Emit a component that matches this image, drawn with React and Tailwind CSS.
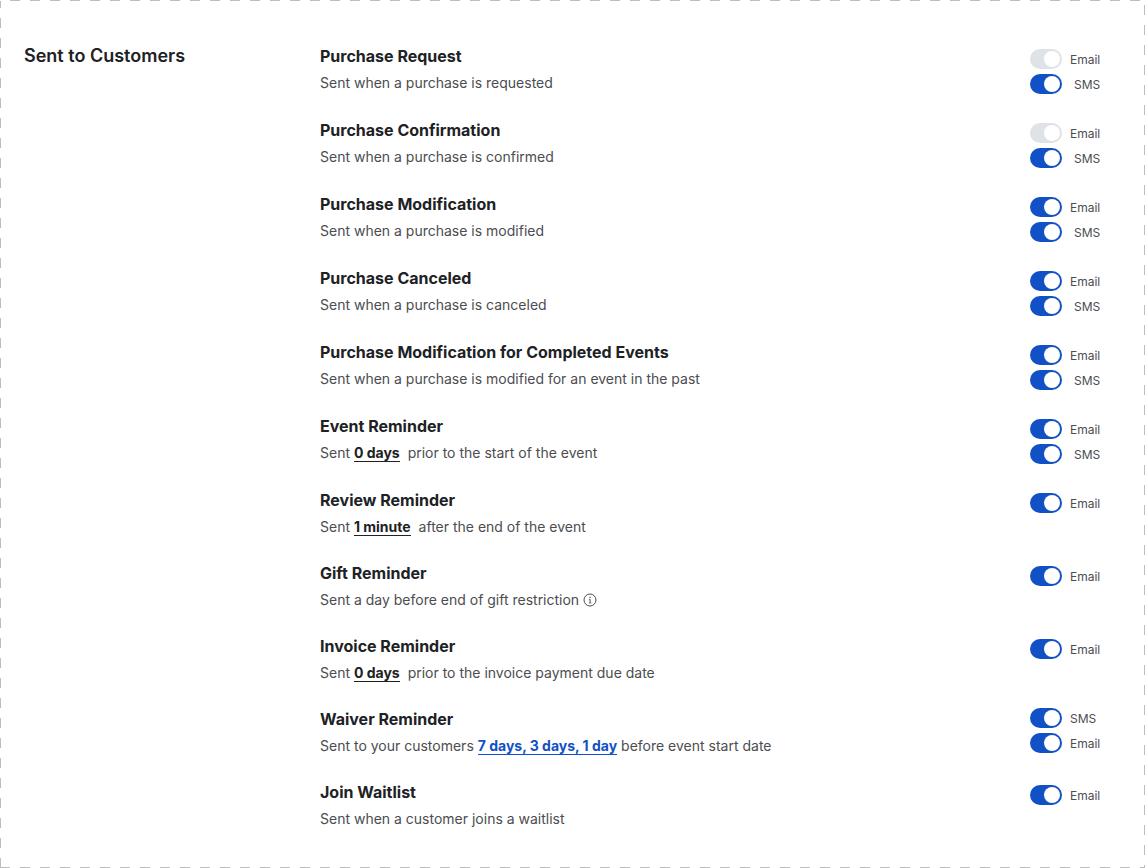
import React, { useState } from "react";

const notifications = [
  {
    id: "purchase-request",
    title: "Purchase Request",
    description: "Sent when a purchase is requested",
    channels: [
      { name: "Email", locked: true },
      { name: "SMS" },
    ],
  },
  {
    id: "purchase-confirmation",
    title: "Purchase Confirmation",
    description: "Sent when a purchase is confirmed",
    channels: [
      { name: "Email", locked: true },
      { name: "SMS" },
    ],
  },
  {
    id: "purchase-modification",
    title: "Purchase Modification",
    description: "Sent when a purchase is modified",
    channels: [{ name: "Email" }, { name: "SMS" }],
  },
  {
    id: "purchase-canceled",
    title: "Purchase Canceled",
    description: "Sent when a purchase is canceled",
    channels: [{ name: "Email" }, { name: "SMS" }],
  },
  {
    id: "purchase-modification-completed",
    title: "Purchase Modification for Completed Events",
    description: "Sent when a purchase is modified for an event in the past",
    channels: [{ name: "Email" }, { name: "SMS" }],
  },
  {
    id: "event-reminder",
    title: "Event Reminder",
    description: (
      <>
        Sent <Timing>0 days</Timing> prior to the start of the event
      </>
    ),
    channels: [{ name: "Email" }, { name: "SMS" }],
  },
  {
    id: "review-reminder",
    title: "Review Reminder",
    description: (
      <>
        Sent <Timing>1 minute</Timing> after the end of the event
      </>
    ),
    channels: [{ name: "Email" }],
  },
  {
    id: "gift-reminder",
    title: "Gift Reminder",
    description: (
      <>
        Sent a day before end of gift restriction{" "}
        <button type="button" aria-label="More info" className="inline-block align-[-2px]">
          <InfoIcon />
        </button>
      </>
    ),
    channels: [{ name: "Email" }],
  },
  {
    id: "invoice-reminder",
    title: "Invoice Reminder",
    description: (
      <>
        Sent <Timing>0 days</Timing> prior to the invoice payment due date
      </>
    ),
    channels: [{ name: "Email" }],
  },
  {
    id: "waiver-reminder",
    title: "Waiver Reminder",
    description: (
      <>
        Sent to your customers{" "}
        <a
          href="#waiver-schedule"
          className="inline-block border-b border-[#1251c5] font-bold leading-4 text-[#1251c5]"
        >
          7 days, 3 days, 1 day
        </a>{" "}
        before event start date
      </>
    ),
    channels: [{ name: "SMS" }, { name: "Email" }],
  },
  {
    id: "join-waitlist",
    title: "Join Waitlist",
    description: "Sent when a customer joins a waitlist",
    channels: [{ name: "Email" }],
  },
];

function InfoIcon() {
  return (
    <svg width="14" height="14" viewBox="0 0 14 14" fill="none" stroke="#4b4d50" aria-hidden="true">
      <circle cx="7" cy="7" r="6" />
      <path d="M6.1 6.3H7.1V10" strokeWidth="1" />
      <path d="M5.8 10H8.4" strokeWidth="0.7" />
      <circle cx="7" cy="4.3" r="0.7" fill="#4b4d50" stroke="none" />
    </svg>
  );
}

function Timing({ children }) {
  return (
    <button
      type="button"
      className="mr-1 cursor-pointer border-b border-[#202124] font-bold leading-4 text-[#202124]"
    >
      {children}
    </button>
  );
}

const Toggle = ({ channel, title, indent }) => {
  const [enabled, setEnabled] = useState(true);

  return (
    <label className="flex h-5 items-center">
      <input
        type="checkbox"
        role="switch"
        checked={enabled}
        disabled={channel.locked}
        onChange={() => setEnabled(!enabled)}
        aria-label={`${title} ${channel.name}`}
        className="flex h-5 w-8 shrink-0 cursor-pointer appearance-none items-center rounded-full bg-[#dfe2e6] px-0.5 before:size-4 before:rounded-full before:bg-white before:content-[''] checked:justify-end checked:bg-[#1251c5] disabled:cursor-default disabled:bg-[#dfe2e6]"
      />
      <span className={indent ? "ml-3 pt-0.5" : "ml-2 pt-0.5"}>{channel.name}</span>
    </label>
  );
};

const NotificationRow = ({ item }) => {
  const smsFirst = item.channels[0].name === "SMS";

  return (
    <li className="flex items-start justify-between gap-6">
      <div>
        <h3 className="text-base font-bold leading-6 text-[#202124]">{item.title}</h3>
        <p className="mt-1 text-sm leading-[21px]">{item.description}</p>
      </div>
      <div
        className={`flex w-[71px] shrink-0 flex-col gap-[5px] text-xs ${
          smsFirst ? "pt-px" : "pt-[5px]"
        }`}
      >
        {item.channels.map((channel, i) => (
          <Toggle
            key={channel.name}
            channel={channel}
            title={item.title}
            indent={channel.name === "SMS" && i > 0}
          />
        ))}
      </div>
    </li>
  );
};

// Long dashes along the four edges: 10px on, 10px off
const Frame = ({ children }) => (
  <div className="flex flex-col bg-white">
    <div className="h-px bg-[repeating-linear-gradient(90deg,transparent_0_10px,#bdbdbd_10px_20px)]" />
    <div className="flex">
      <div className="w-px shrink-0 bg-[repeating-linear-gradient(180deg,#bdbdbd_0_7px,transparent_7px_17px,#bdbdbd_17px_20px)]" />
      <div className="min-w-0 flex-1">{children}</div>
      <div className="w-px shrink-0 bg-[repeating-linear-gradient(180deg,transparent_0_4px,#bdbdbd_4px_14px,transparent_14px_20px)]" />
    </div>
    <div className="h-px bg-[repeating-linear-gradient(90deg,#bdbdbd_0_10px,transparent_10px_20px)]" />
  </div>
);

const App = () => {
  return (
    <Frame>
      <section className="flex flex-col gap-6 pt-[43px] pr-[43px] pb-[38px] pl-[23px] font-['Inter',sans-serif] text-[#4b4d50] md:flex-row">
        <h2 className="w-[272px] shrink-0 text-lg font-semibold leading-6 text-[#202124]">
          Sent to Customers
        </h2>
        <ul className="flex min-w-0 flex-1 flex-col gap-6">
          {notifications.map((item) => (
            <NotificationRow key={item.id} item={item} />
          ))}
        </ul>
      </section>
    </Frame>
  );
};

export default App;
